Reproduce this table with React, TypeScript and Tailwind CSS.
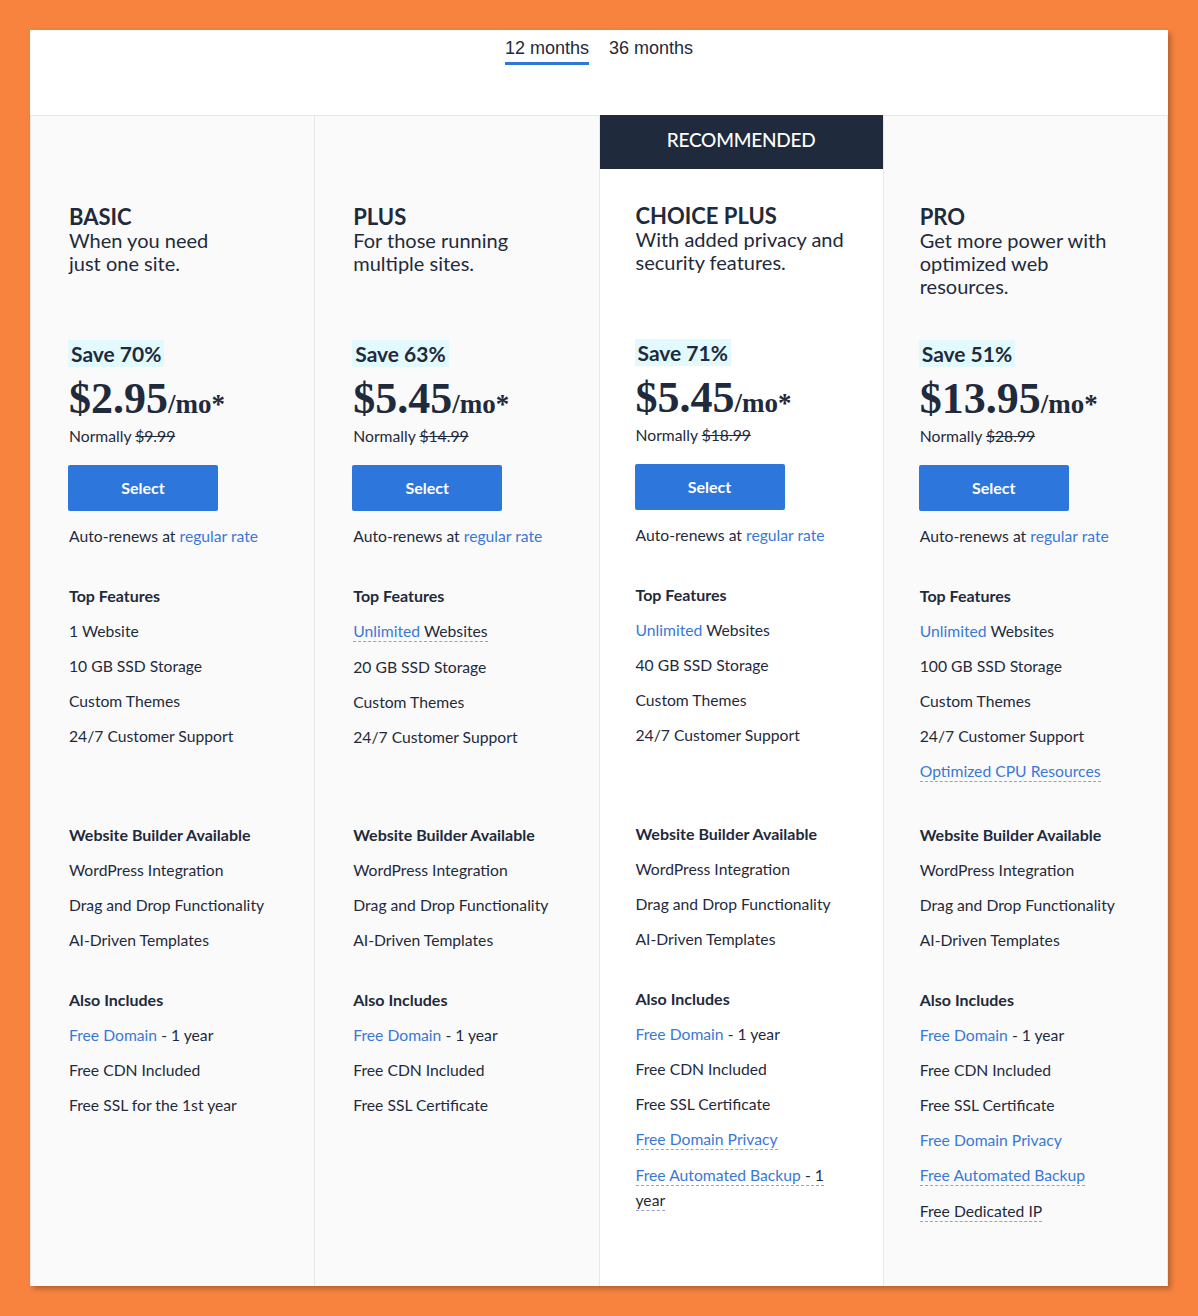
import React from "react";

const sans = { fontFamily: "Lato, 'Open Sans', sans-serif" };

const Blue = ({ children }: { children: React.ReactNode }) => (
  <span className="text-[#3a78d6]">{children}</span>
);

const Dashed = ({ children }: { children: React.ReactNode }) => (
  <span className="inline-block border-b border-dashed border-[#9ca0c8] leading-[20px]">{children}</span>
);

type Plan = {
  name: string;
  desc: string[];
  save: string;
  price: string;
  normal: string;
  top: React.ReactNode[];
  also: React.ReactNode[];
  pad: string;
  rec?: boolean;
};

const domain = (
  <>
    <Blue>Free Domain</Blue> - 1 year
  </>
);

const plans: Plan[] = [
  {
    name: "BASIC",
    desc: ["When you need", "just one site."],
    save: "Save 70%",
    price: "$2.95",
    normal: "$9.99",
    pad: "pt-[36px] pl-[38px]",
    top: ["1 Website", "10 GB SSD Storage", "Custom Themes", "24/7 Customer Support"],
    also: [domain, "Free CDN Included", "Free SSL for the 1st year"],
  },
  {
    name: "PLUS",
    desc: ["For those running", "multiple sites."],
    save: "Save 63%",
    price: "$5.45",
    normal: "$14.99",
    pad: "pt-[36px] pl-[38px]",
    top: [
      <Dashed>
        <Blue>Unlimited</Blue> Websites
      </Dashed>,
      "20 GB SSD Storage",
      "Custom Themes",
      "24/7 Customer Support",
    ],
    also: [domain, "Free CDN Included", "Free SSL Certificate"],
  },
  {
    name: "CHOICE PLUS",
    desc: ["With added privacy and", "security features."],
    save: "Save 71%",
    price: "$5.45",
    normal: "$18.99",
    pad: "pt-[35px] pl-[36px]",
    rec: true,
    top: [
      <>
        <Blue>Unlimited</Blue> Websites
      </>,
      "40 GB SSD Storage",
      "Custom Themes",
      "24/7 Customer Support",
    ],
    also: [
      domain,
      "Free CDN Included",
      "Free SSL Certificate",
      <Dashed>
        <Blue>Free Domain Privacy</Blue>
      </Dashed>,
      <div>
        <div>
          <Dashed>
            <Blue>Free Automated Backup</Blue> - 1
          </Dashed>
        </div>
        <div className="mt-[4px]">
          <Dashed>year</Dashed>
        </div>
      </div>,
    ],
  },
  {
    name: "PRO",
    desc: ["Get more power with", "optimized web", "resources."],
    save: "Save 51%",
    price: "$13.95",
    normal: "$28.99",
    pad: "pt-[36px] pl-[36px]",
    top: [
      <>
        <Blue>Unlimited</Blue> Websites
      </>,
      "100 GB SSD Storage",
      "Custom Themes",
      "24/7 Customer Support",
      <Dashed>
        <Blue>Optimized CPU Resources</Blue>
      </Dashed>,
    ],
    also: [
      domain,
      "Free CDN Included",
      "Free SSL Certificate",
      <Blue>Free Domain Privacy</Blue>,
      <Dashed>
        <Blue>Free Automated Backup</Blue>
      </Dashed>,
      <Dashed>Free Dedicated IP</Dashed>,
    ],
  },
];

const builder = ["WordPress Integration", "Drag and Drop Functionality", "AI-Driven Templates"];

function Section({ title, items, className }: { title: string; items: React.ReactNode[]; className?: string }) {
  return (
    <div className={className}>
      <div className="text-[16px] leading-[20px] font-bold">{title}</div>
      <ul className="mt-[15px] flex flex-col gap-[15px]">
        {items.map((it, i) => (
          <li key={i} className="text-[15.7px] leading-[20px]">
            {it}
          </li>
        ))}
      </ul>
    </div>
  );
}

function Column({ p }: { p: Plan }) {
  return (
    <div
      className={`flex flex-col border-l border-[#e8e8e8] ${
        p.rec ? "bg-white" : "bg-[#fafafa] border-t"
      }`}
    >
      {p.rec ? (
        <div className="h-[54px] pb-[3px] bg-[#1f2a3c] text-white flex items-center justify-center text-[19px] font-medium tracking-[-0.2px]">
          RECOMMENDED
        </div>
      ) : (
        <div className="h-[53px]" />
      )}
      <div className={`pr-[16px] ${p.pad} pb-[40px] text-[#1f2a3c]`}>
        <div className="h-[135px]">
          <div className="text-[22px] leading-[24px] font-bold">{p.name}</div>
          <div className="text-[20px] leading-[23px]">
            {p.desc.map((d, i) => (
              <div key={i}>{d}</div>
            ))}
          </div>
        </div>
        <div className="inline-block bg-[#e2fafd] h-[27px] leading-[27px] px-[3px] -ml-[1px] text-[21px] font-bold">
          {p.save}
        </div>
        <div
          className="mt-[9px] h-[44px] text-[44px] leading-[44px] font-bold whitespace-nowrap"
          style={{ fontFamily: "'Liberation Serif', serif" }}
        >
          {p.price}
          <span className="text-[27px] leading-none">/mo*</span>
        </div>
        <div className="mt-[5px] text-[15.7px] leading-[20px]">
          Normally <span className="line-through">{p.normal}</span>
        </div>
        <button className="mt-[19px] block w-[150px] h-[46px] rounded-[2px] bg-[#2d76db] text-white text-[16px] font-bold -ml-[1px]">
          Select
        </button>
        <div className="mt-[15px] text-[15.7px] leading-[20px]">
          Auto-renews at <Blue>regular rate</Blue>
        </div>
        <Section title="Top Features" items={p.top} className="mt-[40px] h-[239px]" />
        <Section title="Website Builder Available" items={builder} className="h-[165px]" />
        <Section title="Also Includes" items={p.also} />
      </div>
    </div>
  );
}

export default function App() {
  return (
    <div className="min-h-screen bg-[#f7833f] p-[30px]" style={sans}>
      <div className="bg-white shadow-[3px_3px_5px_rgba(0,0,0,0.25)] flex flex-col h-[1256px]">
        <div className="h-[85px] pt-[8px] flex justify-center gap-[20px] text-[#1f2a3c]" style={{ fontFamily: "'Liberation Sans', Arial, sans-serif" }}>
          <div className="flex flex-col">
            <span className="text-[18px] leading-[21px]">12 months</span>
            <span className="mt-[3px] h-[3px] bg-[#2d76db]" />
          </div>
          <div className="flex flex-col">
            <span className="text-[18px] leading-[21px]">36 months</span>
          </div>
        </div>
        <div className="grid grid-cols-4 flex-1 border-r border-[#e8e8e8]">
          {plans.map((p) => (
            <Column key={p.name} p={p} />
          ))}
        </div>
      </div>
    </div>
  );
}
